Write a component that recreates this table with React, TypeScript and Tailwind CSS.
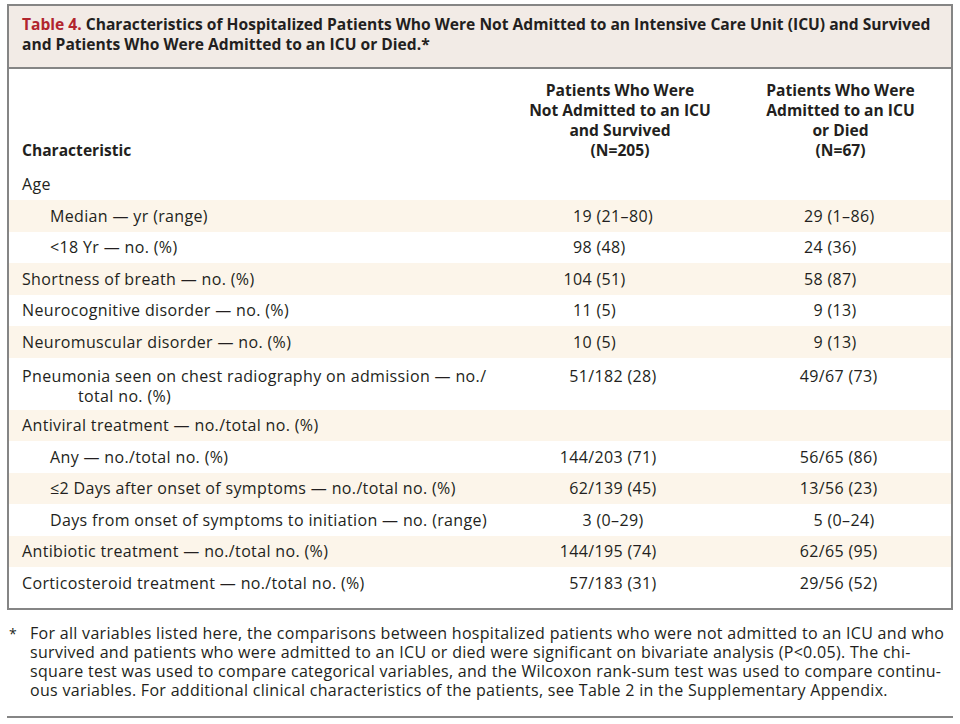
import React from 'react';

type Row = {
  label: string;
  cont?: string;
  indent?: boolean;
  stripe?: boolean;
  a?: [string, string];
  b?: [string, string];
  frac?: boolean;
};

const rows: Row[] = [
  { label: 'Median — yr (range)', indent: true, stripe: true, a: ['19', '(21–80)'], b: ['29', '(1–86)'] },
  { label: '<18 Yr — no. (%)', indent: true, a: ['98', '(48)'], b: ['24', '(36)'] },
  { label: 'Shortness of breath — no. (%)', stripe: true, a: ['104', '(51)'], b: ['58', '(87)'] },
  { label: 'Neurocognitive disorder — no. (%)', a: ['11', '(5)'], b: ['9', '(13)'] },
  { label: 'Neuromuscular disorder — no. (%)', stripe: true, a: ['10', '(5)'], b: ['9', '(13)'] },
  {
    label: 'Pneumonia seen on chest radiography on admission — no./',
    cont: 'total no. (%)',
    a: ['51/182', '(28)'],
    b: ['49/67', '(73)'],
    frac: true,
  },
  { label: 'Antiviral treatment — no./total no. (%)', stripe: true },
  { label: 'Any — no./total no. (%)', indent: true, a: ['144/203', '(71)'], b: ['56/65', '(86)'], frac: true },
  { label: '≤2 Days after onset of symptoms — no./total no. (%)', indent: true, stripe: true, a: ['62/139', '(45)'], b: ['13/56', '(23)'], frac: true },
  { label: 'Days from onset of symptoms to initiation — no. (range)', indent: true, a: ['3', '(0–29)'], b: ['5', '(0–24)'] },
  { label: 'Antibiotic treatment — no./total no. (%)', stripe: true, a: ['144/195', '(74)'], b: ['62/65', '(95)'], frac: true },
  { label: 'Corticosteroid treatment — no./total no. (%)', a: ['57/183', '(31)'], b: ['29/56', '(52)'], frac: true },
];

// numbers line up on the opening parenthesis, as in the printed table
function Value({ v, frac, second }: { v?: [string, string]; frac?: boolean; second?: boolean }) {
  if (!v) return <div />;
  const w = second ? (frac ? 'w-[114px]' : 'w-[93px]') : frac ? 'w-[113px]' : 'w-[82px]';
  return (
    <div className="flex">
      <span className={`${w} shrink-0 text-right`}>{v[0]}</span>
      <span className="whitespace-pre">{' ' + v[1]}</span>
    </div>
  );
}

function DataRow({ row }: { row: Row }) {
  const tall = !!row.cont;
  return (
    <div
      className={`grid grid-cols-[501px_220px_1fr] leading-5 ${
        row.stripe ? 'bg-[#fcf5ea]' : 'bg-white'
      } ${tall ? 'h-[52px] pt-2' : 'h-[31.5px] items-center'}`}
    >
      <div className={row.indent ? 'pl-[41px]' : 'pl-[13px]'}>
        <div>{row.label}</div>
        {row.cont && <div className="pl-[56px]">{row.cont}</div>}
      </div>
      <Value v={row.a} frac={row.frac} />
      <Value v={row.b} frac={row.frac} second />
    </div>
  );
}

const footnote = [
  'For all variables listed here, the comparisons between hospitalized patients who were not admitted to an ICU and who',
  'survived and patients who were admitted to an ICU or died were significant on bivariate analysis (P<0.05). The chi-',
  'square test was used to compare categorical variables, and the Wilcoxon rank-sum test was used to compare continu-',
  'ous variables. For additional clinical characteristics of the patients, see Table 2 in the Supplementary Appendix.',
];

export default function App() {
  return (
    <div
      className="h-[724px] w-[960px] bg-white text-[16px] tracking-[0.35px] text-[#231f20]"
      style={{ fontFamily: '"Open Sans", "Noto Sans", sans-serif' }}
    >
      <div className="pl-[7px] pr-[7px] pt-[4px]">
        {/* Table box */}
        <div className="border-2 border-[#858585]">
          <div className="h-[63px] border-b-2 border-[#858585] bg-[#f2ebe6] pl-[13px] pt-[8px] text-[15.6px] font-bold leading-5 tracking-normal">
            <span className="text-[#b1252e]">Table 4.</span> Characteristics of Hospitalized Patients Who Were Not
            Admitted to an Intensive Care Unit (ICU) and Survived
            <br />
            and Patients Who Were Admitted to an ICU or Died.*
          </div>

          {/* Column headings */}
          <div className="grid h-[99px] grid-cols-[501px_220px_1fr] items-start pt-[11px] text-[15.6px] font-bold leading-5 tracking-normal">
            <div className="flex h-20 items-end pl-[13px]">Characteristic</div>
            <div className="text-center">
              Patients Who Were
              <br />
              Not Admitted to an ICU
              <br />
              and Survived
              <br />
              (N=205)
            </div>
            <div className="text-center">
              Patients Who Were
              <br />
              Admitted to an ICU
              <br />
              or Died
              <br />
              (N=67)
            </div>
          </div>

          <div className="flex h-8 items-center pl-[13px]">Age</div>
          {rows.map((r, i) => (
            <DataRow key={i} row={r} />
          ))}
          <div className="h-[9px]" />
        </div>

        {/* Footnote */}
        <div className="mt-[14px] flex tracking-[0.3px]">
          <span className="w-[23px] shrink-0 pl-[2px] text-[14px] leading-[19px]">*</span>
          <div className="flex flex-col">
            {footnote.map((line, i) => (
              <div key={i} className="h-[19px] whitespace-nowrap leading-[19px]">
                {line}
              </div>
            ))}
          </div>
        </div>
        <div className="mt-[16px] border-b-2 border-[#858585]" />
      </div>
    </div>
  );
}
